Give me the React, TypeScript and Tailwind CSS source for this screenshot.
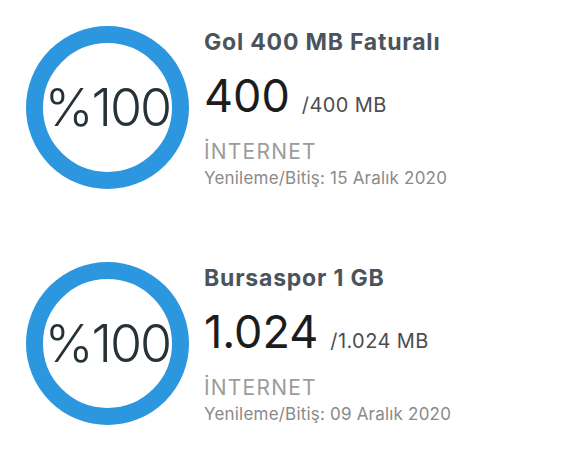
import React from "react";

const items = [
  { title: "Gol 400 MB Faturalı", used: "400", total: "/400 MB", date: "Yenileme/Bitiş: 15 Aralık 2020" },
  { title: "Bursaspor 1 GB", used: "1.024", total: "/1.024 MB", date: "Yenileme/Bitiş: 09 Aralık 2020" },
];

function Ring() {
  return (
    <div className="w-[163px] h-[163px] shrink-0 rounded-full border-[17px] border-[#2c97df] flex items-center justify-center">
      <span className="text-[52px] leading-none font-light text-[#263238] tracking-[-2px]">%100</span>
    </div>
  );
}

export default function App() {
  return (
    <div className="w-[577px] h-[466px] bg-white flex flex-col gap-[73px] pt-[26px] pl-[26px]" style={{ fontFamily: "Inter, 'Noto Sans', sans-serif" }}>
      {items.map((it) => (
        <div key={it.title} className="flex items-start gap-[15px]">
          <Ring />
          <div className="flex flex-col pt-[2px]">
            <div className="text-[23px] font-bold text-[#4a545c] leading-[28px] tracking-[0.8px]">{it.title}</div>
            <div className="flex items-baseline gap-[12px] mt-[18px]">
              <span className="text-[45px] leading-[44px] text-[#1c1c1c]">{it.used}</span>
              <span className="text-[20px] text-[#4d4d4d] tracking-[0.4px]">{it.total}</span>
            </div>
            <div className="text-[21px] leading-[26px] text-[#9c9c9c] mt-[19px] tracking-[1.2px]">İNTERNET</div>
            <div className="text-[17px] leading-[22px] text-[#8a8a8a] mt-[2px] tracking-[0.2px]">{it.date}</div>
          </div>
        </div>
      ))}
    </div>
  );
}
